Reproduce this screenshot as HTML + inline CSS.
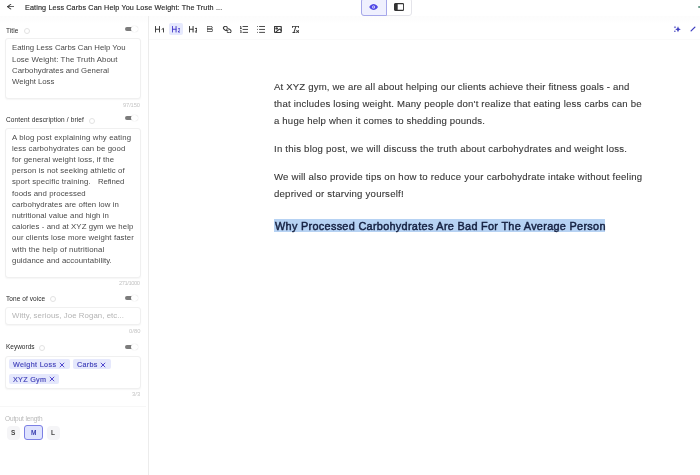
<!DOCTYPE html>
<html><head><meta charset="utf-8">
<style>
*{box-sizing:border-box;margin:0;padding:0}
html,body{width:700px;height:475px;overflow:hidden;background:#fff;font-family:"Liberation Sans",sans-serif;color:#222}
.a{position:absolute}
.L{position:absolute;white-space:nowrap;line-height:1;will-change:transform}
.card{position:absolute;border:1px solid #f0f0f0;border-radius:3px;background:#fff;box-shadow:0 1px 1.5px rgba(0,0,0,.04)}
.tog{position:absolute;width:15px;height:8px}
.tog .tr{position:absolute;left:0;top:0;width:9.5px;height:3.8px;border-radius:1.9px;background:#7c7c7c}
.tog .kn{position:absolute;left:6.6px;top:-1.35px;width:6.5px;height:6.5px;border-radius:50%;background:#fff;box-shadow:0 0 1px rgba(0,0,0,.22)}
.info{position:absolute;width:6px;height:6px;border-radius:50%;border:1px solid #e2e2e2}
.tag{position:absolute;background:#e5e8fc;border-radius:2px}
.x{position:absolute;color:#4338ca;font-size:8px;line-height:1}
</style></head><body>
<!-- header -->
<div class="a" style="left:0;top:16px;width:700px;height:8px;background:linear-gradient(#fcfcfc,#fff)"></div>
<div class="a" style="left:361px;top:-2px;width:51px;height:17.5px;border:1px solid #e4e4ea;border-radius:3px"></div>
<div class="a" style="left:361px;top:-2px;width:25.5px;height:17.5px;border:1px solid #a5a7ea;background:#eff0fe;border-radius:3px 0 0 3px"></div>
<svg class="a" style="left:393.8px;top:3px" width="10.2" height="8" viewBox="0 0 11 8" preserveAspectRatio="none"><rect x="0.6" y="0.6" width="9.8" height="6.8" rx="1" fill="#fff" stroke="#333" stroke-width="1.2"/><rect x="0.6" y="0.6" width="3.4" height="6.8" fill="#333"/></svg>
<div class="a" style="left:698.2px;top:5.6px;width:2px;height:2.6px;background:#6f9c8c;border-radius:1.3px 0 0 1.3px"></div>
<!-- sidebar -->
<div class="a" style="left:147.5px;top:16px;width:1px;height:459px;background:#ececec"></div>
<div class="a" style="left:0;top:405.5px;width:146px;height:1px;background:#f7f7f7"></div>
<div class="info" style="left:23.7px;top:28px"></div>
<div class="info" style="left:89px;top:117.5px"></div>
<div class="info" style="left:49.8px;top:296.3px"></div>
<div class="info" style="left:39.2px;top:344.6px"></div>
<div class="tog" style="left:124.7px;top:27.3px"><div class="tr"></div><div class="kn"></div></div>
<div class="tog" style="left:124.7px;top:116.3px"><div class="tr"></div><div class="kn"></div></div>
<div class="tog" style="left:124.7px;top:296.1px"><div class="tr"></div><div class="kn"></div></div>
<div class="tog" style="left:124.7px;top:345.1px"><div class="tr"></div><div class="kn"></div></div>
<div class="card" style="left:5px;top:37.8px;width:135.5px;height:61px"></div>
<div class="card" style="left:5px;top:127.5px;width:135.5px;height:150.3px"></div>
<div class="card" style="left:5px;top:307px;width:135.5px;height:18px"></div>
<div class="card" style="left:5px;top:356px;width:135.5px;height:32.6px"></div>
<div class="tag" style="left:9px;top:359.3px;width:61px;height:10px"></div>
<div class="tag" style="left:73.2px;top:359.3px;width:37.5px;height:10px"></div>
<div class="tag" style="left:9px;top:374px;width:49.6px;height:10px"></div>
<svg class="a" style="left:59px;top:361.5px" width="6" height="6" viewBox="0 0 6 6"><path d="M0.8 0.8L5.2 5.2M5.2 0.8L0.8 5.2" stroke="#4338ca" stroke-width="0.9"/></svg>
<svg class="a" style="left:99.7px;top:361.5px" width="6" height="6" viewBox="0 0 6 6"><path d="M0.8 0.8L5.2 5.2M5.2 0.8L0.8 5.2" stroke="#4338ca" stroke-width="0.9"/></svg>
<svg class="a" style="left:48.5px;top:376.3px" width="6" height="6" viewBox="0 0 6 6"><path d="M0.8 0.8L5.2 5.2M5.2 0.8L0.8 5.2" stroke="#4338ca" stroke-width="0.9"/></svg>
<div class="a" style="left:6.5px;top:426px;width:13px;height:13.5px;border-radius:4px;background:#f5f5f7"></div>
<div class="a" style="left:24px;top:425.3px;width:19.4px;height:14.3px;border:1px solid #7c80e4;background:#dfe3fe;border-radius:3px"></div>
<div class="a" style="left:46.5px;top:426px;width:13px;height:13.5px;border-radius:4px;background:#f5f5f7"></div>
<div class="L" style="left:10.8px;top:430px;font-size:6.5px;font-weight:bold;color:#444">S</div>
<div class="L" style="left:30.8px;top:430px;font-size:6.5px;font-weight:bold;color:#3b3fb0">M</div>
<div class="L" style="left:51px;top:430px;font-size:6.5px;font-weight:bold;color:#444">L</div>
<!-- toolbar -->
<div class="a" style="left:148.5px;top:39px;width:552px;height:1px;background:#fafafa"></div>
<div class="a" style="left:169px;top:23px;width:14.3px;height:12px;background:#e6e9fd;border-radius:2px"></div>
<svg class="a" style="left:369.3px;top:3.6px" width="9.2" height="6" viewBox="0 0 10 6" preserveAspectRatio="none"><path d="M0.2 3C1.8 0.8 3.4 0 5 0S8.2 0.8 9.8 3C8.2 5.2 6.6 6 5 6S1.8 5.2 0.2 3Z" fill="#4f46e5"/><circle cx="5" cy="3" r="1.6" fill="#e9eafd"/><circle cx="5" cy="3" r="0.8" fill="#4f46e5"/></svg>
<svg class="a" style="left:6.5px;top:4.3px" width="7.50" height="5.40" viewBox="4 4 16 16" preserveAspectRatio="none" fill="none" stroke="#333" stroke-width="2.4" stroke-linecap="round" stroke-linejoin="round" ><path d="m12 19-7-7 7-7"/><path d="M19 12H5"/></svg>
<svg class="a" style="left:154.6px;top:26px" width="9.00" height="6.50" viewBox="3 5 18 14" preserveAspectRatio="none" fill="none" stroke="#3a3a3a" stroke-width="2.0" stroke-linecap="round" stroke-linejoin="round" ><path d="M4 12h8"/><path d="M4 18V6"/><path d="M12 18V6"/><path d="m17 12 3-2v8"/></svg>
<svg class="a" style="left:171.8px;top:26px" width="8.60" height="6.50" viewBox="3 5 19 14" preserveAspectRatio="none" fill="none" stroke="#4338ca" stroke-width="2.1" stroke-linecap="round" stroke-linejoin="round" ><path d="M4 12h8"/><path d="M4 18V6"/><path d="M12 18V6"/><path d="M21 18h-4c0-4 4-3 4-6 0-1.5-2-2.5-4-1"/></svg>
<svg class="a" style="left:188.9px;top:26px" width="8.60" height="6.50" viewBox="3 5 19 14" preserveAspectRatio="none" fill="none" stroke="#3a3a3a" stroke-width="2.3" stroke-linecap="round" stroke-linejoin="round" ><path d="M4 12h8"/><path d="M4 18V6"/><path d="M12 18V6"/><path d="M17.5 10.5c1.7-1 3.5 0 3.5 1.5a2 2 0 0 1-2 2"/><path d="M17 17.5c2 1.5 4 .3 4-1.5a2 2 0 0 0-2-2"/></svg>
<svg class="a" style="left:207.1px;top:26.1px" width="6.10" height="6.00" viewBox="5 3 15 18" preserveAspectRatio="none" fill="none" stroke="#3a3a3a" stroke-width="2.3" stroke-linecap="round" stroke-linejoin="round" ><path d="M6 4h8a4 4 0 0 1 0 8H6z"/><path d="M6 12h9a4 4 0 0 1 0 8H6z"/></svg>
<svg class="a" style="left:222.6px;top:25.8px" width="8.60" height="7.20" viewBox="1 1 22 22" preserveAspectRatio="none" fill="none" stroke="#3a3a3a" stroke-width="2.9" stroke-linecap="round" stroke-linejoin="round" transform="scale(-1,1)"><path d="M10 13a5 5 0 0 0 7.54.54l3-3a5 5 0 0 0-7.07-7.07l-1.72 1.71"/><path d="M14 11a5 5 0 0 0-7.54-.54l-3 3a5 5 0 0 0 7.07 7.07l1.71-1.71"/></svg>
<svg class="a" style="left:240px;top:25.8px" width="8.10" height="6.90" viewBox="3 5 19 14" preserveAspectRatio="none" fill="none" stroke="#3a3a3a" stroke-width="2.0" stroke-linecap="round" stroke-linejoin="round" ><path d="M10 6h11"/><path d="M10 12h11"/><path d="M10 18h11"/><path d="M4 6h1v4"/><path d="M4 10h2"/><path d="M6 18H4c0-1 2-2 2-3s-1-1.5-2-1"/></svg>
<svg class="a" style="left:256.8px;top:25.8px" width="8.40" height="6.90" viewBox="2 5 20 14" preserveAspectRatio="none" fill="none" stroke="#3a3a3a" stroke-width="2.0" stroke-linecap="round" stroke-linejoin="round" ><path d="M8 6h13"/><path d="M8 12h13"/><path d="M8 18h13"/><path d="M3 6h.01"/><path d="M3 12h.01"/><path d="M3 18h.01"/></svg>
<svg class="a" style="left:274.2px;top:26.2px" width="7.60" height="6.80" viewBox="2 2 20 20" preserveAspectRatio="none" fill="none" stroke="#3a3a3a" stroke-width="3.2" stroke-linecap="round" stroke-linejoin="round" ><rect width="18" height="18" x="3" y="3" rx="2" ry="2"/><circle cx="9" cy="9" r="2"/><path d="m21 15-3.086-3.086a2 2 0 0 0-2.828 0L6 21"/></svg>
<svg class="a" style="left:291.7px;top:26.1px" width="7.00" height="6.80" viewBox="3 3 18 18" preserveAspectRatio="none" fill="none" stroke="#3a3a3a" stroke-width="2.6" stroke-linecap="round" stroke-linejoin="round" ><path d="M4 7V4h16v3"/><path d="M5 20h6"/><path d="M13 4 8 20"/><path d="m15 15 5 5"/><path d="m20 15-5 5"/></svg>
<svg class="a" style="left:673px;top:25px" width="8" height="8" viewBox="0 0 8 8"><path d="M5 1.3L5.9 3.4L7.8 4.3L5.9 5.2L5 7.3L4.1 5.2L2.2 4.3L4.1 3.4Z" fill="#3f3fc0"/><path d="M2 0.8L2.4 1.8L3.3 2.2L2.4 2.6L2 3.6L1.6 2.6L0.7 2.2L1.6 1.8Z" fill="#3f3fc0"/><circle cx="1.9" cy="6.3" r="0.75" fill="#3f3fc0"/></svg>
<svg class="a" style="left:689.5px;top:26.2px" width="6" height="6" viewBox="0 0 6 6"><path d="M1.1 4.9L4.9 1.1" stroke="#3f3fc0" stroke-width="1.3" stroke-linecap="round"/></svg>
<!-- heading highlight -->
<div class="a" style="left:274px;top:218.8px;width:330.8px;height:13px;background:#b6d2f3"></div>
<div class="L" style="left:24.80px;top:3.81px;font-size:7.2px;letter-spacing:0.144px;color:#2a2a2a;font-weight:normal;-webkit-text-stroke:0.15px #2a2a2a">Eating Less Carbs Can Help You Lose Weight: The Truth ...</div>
<div class="L" style="left:5.70px;top:27.50px;font-size:6.5px;letter-spacing:0.063px;color:#2a2a2a;font-weight:normal;">Title</div>
<div class="L" style="left:5.70px;top:116.50px;font-size:6.5px;letter-spacing:0.147px;color:#2a2a2a;font-weight:normal;">Content description / brief</div>
<div class="L" style="left:5.80px;top:295.50px;font-size:6.5px;letter-spacing:0.074px;color:#2a2a2a;font-weight:normal;">Tone of voice</div>
<div class="L" style="left:5.80px;top:344.00px;font-size:6.5px;letter-spacing:-0.007px;color:#2a2a2a;font-weight:normal;">Keywords</div>
<div class="L" style="left:5.20px;top:415.50px;font-size:6.5px;letter-spacing:-0.119px;color:#b8b8b8;font-weight:normal;">Output length</div>
<div class="L" style="left:12.00px;top:44.40px;font-size:7.8px;letter-spacing:-0.002px;color:#4a4a4a;font-weight:normal;">Eating Less Carbs Can Help You</div>
<div class="L" style="left:12.00px;top:55.60px;font-size:7.8px;letter-spacing:0.094px;color:#4a4a4a;font-weight:normal;">Lose Weight: The Truth About</div>
<div class="L" style="left:12.00px;top:66.80px;font-size:7.8px;letter-spacing:0.032px;color:#4a4a4a;font-weight:normal;">Carbohydrates and General</div>
<div class="L" style="left:12.00px;top:78.00px;font-size:7.8px;letter-spacing:-0.047px;color:#4a4a4a;font-weight:normal;">Weight Loss</div>
<div class="L" style="left:12.00px;top:133.50px;font-size:7.8px;letter-spacing:0.115px;color:#4a4a4a;font-weight:normal;">A blog post explaining why eating</div>
<div class="L" style="left:12.00px;top:144.70px;font-size:7.8px;letter-spacing:0.095px;color:#4a4a4a;font-weight:normal;">less carbohydrates can be good</div>
<div class="L" style="left:12.00px;top:155.90px;font-size:7.8px;letter-spacing:0.092px;color:#4a4a4a;font-weight:normal;">for general weight loss, if the</div>
<div class="L" style="left:12.00px;top:167.10px;font-size:7.8px;letter-spacing:0.108px;color:#4a4a4a;font-weight:normal;">person is not seeking athletic of</div>
<div class="L" style="left:12.00px;top:178.30px;font-size:7.8px;letter-spacing:0.139px;color:#4a4a4a;font-weight:normal;">sport specific training.</div>
<div class="L" style="left:12.00px;top:189.50px;font-size:7.8px;letter-spacing:0.073px;color:#4a4a4a;font-weight:normal;">foods and processed</div>
<div class="L" style="left:12.00px;top:200.70px;font-size:7.8px;letter-spacing:0.084px;color:#4a4a4a;font-weight:normal;">carbohydrates are often low in</div>
<div class="L" style="left:12.00px;top:211.90px;font-size:7.8px;letter-spacing:0.067px;color:#4a4a4a;font-weight:normal;">nutritional value and high in</div>
<div class="L" style="left:12.00px;top:223.10px;font-size:7.8px;letter-spacing:0.080px;color:#4a4a4a;font-weight:normal;">calories - and at XYZ gym we help</div>
<div class="L" style="left:12.00px;top:234.30px;font-size:7.8px;letter-spacing:0.106px;color:#4a4a4a;font-weight:normal;">our clients lose more weight faster</div>
<div class="L" style="left:12.00px;top:245.50px;font-size:7.8px;letter-spacing:0.144px;color:#4a4a4a;font-weight:normal;">with the help of nutritional</div>
<div class="L" style="left:12.00px;top:256.70px;font-size:7.8px;letter-spacing:0.073px;color:#4a4a4a;font-weight:normal;">guidance and accountability.</div>
<div class="L" style="left:97.70px;top:178.30px;font-size:7.8px;letter-spacing:-0.096px;color:#4a4a4a;font-weight:normal;">Refined</div>
<div class="L" style="left:11.80px;top:312.40px;font-size:7.8px;letter-spacing:0.078px;color:#b4b4b4;font-weight:normal;">Witty, serious, Joe Rogan, etc...</div>
<div class="L" style="left:123.00px;top:102.59px;font-size:5.8px;letter-spacing:-0.147px;color:#c4c4c4;font-weight:normal;">97/150</div>
<div class="L" style="left:119.00px;top:281.09px;font-size:5.8px;letter-spacing:-0.455px;color:#c4c4c4;font-weight:normal;">271/1000</div>
<div class="L" style="left:128.60px;top:329.09px;font-size:5.8px;letter-spacing:0.034px;color:#c4c4c4;font-weight:normal;">0/80</div>
<div class="L" style="left:131.80px;top:391.89px;font-size:5.8px;letter-spacing:0.069px;color:#c4c4c4;font-weight:normal;">3/3</div>
<div class="L" style="left:13.00px;top:361.21px;font-size:7.2px;letter-spacing:0.358px;color:#3f3fb8;font-weight:normal;-webkit-text-stroke:0.15px #3f3fb8">Weight Loss</div>
<div class="L" style="left:76.50px;top:361.21px;font-size:7.2px;letter-spacing:0.278px;color:#3f3fb8;font-weight:normal;-webkit-text-stroke:0.15px #3f3fb8">Carbs</div>
<div class="L" style="left:12.50px;top:376.11px;font-size:7.2px;letter-spacing:0.307px;color:#3f3fb8;font-weight:normal;-webkit-text-stroke:0.15px #3f3fb8">XYZ Gym</div>
<div class="L" style="left:274.00px;top:82.07px;font-size:9.6px;letter-spacing:0.166px;color:#363636;font-weight:normal;-webkit-text-stroke:0.1px #363636">At XYZ gym, we are all about helping our clients achieve their fitness goals - and</div>
<div class="L" style="left:274.00px;top:98.87px;font-size:9.6px;letter-spacing:0.197px;color:#363636;font-weight:normal;-webkit-text-stroke:0.1px #363636">that includes losing weight. Many people don&#x27;t realize that eating less carbs can be</div>
<div class="L" style="left:274.00px;top:115.87px;font-size:9.6px;letter-spacing:0.177px;color:#363636;font-weight:normal;-webkit-text-stroke:0.1px #363636">a huge help when it comes to shedding pounds.</div>
<div class="L" style="left:274.00px;top:144.07px;font-size:9.6px;letter-spacing:0.226px;color:#363636;font-weight:normal;-webkit-text-stroke:0.1px #363636">In this blog post, we will discuss the truth about carbohydrates and weight loss.</div>
<div class="L" style="left:274.00px;top:172.17px;font-size:9.6px;letter-spacing:0.212px;color:#363636;font-weight:normal;-webkit-text-stroke:0.1px #363636">We will also provide tips on how to reduce your carbohydrate intake without feeling</div>
<div class="L" style="left:274.00px;top:188.87px;font-size:9.6px;letter-spacing:0.221px;color:#363636;font-weight:normal;-webkit-text-stroke:0.1px #363636">deprived or starving yourself!</div>
<div class="L" style="left:274.50px;top:220.87px;font-size:10.9px;letter-spacing:0.293px;color:#152040;font-weight:normal;-webkit-text-stroke:0.45px #152040">Why Processed Carbohydrates Are Bad For The Average Person</div>
</body></html>
